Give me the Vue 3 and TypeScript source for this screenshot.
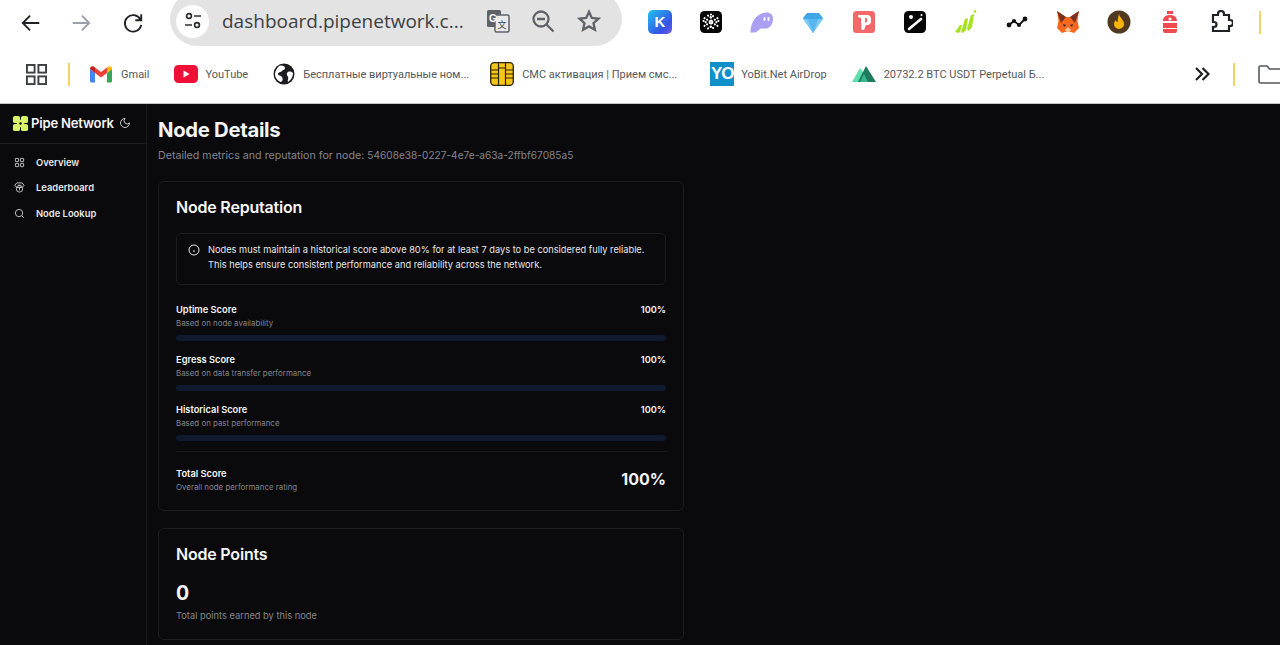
<script setup lang="ts">
const bookmarks = [
  { id: 'gmail', label: 'Gmail' },
  { id: 'youtube', label: 'YouTube' },
  { id: 'globe', label: 'Бесплатные виртуальные ном...' },
  { id: 'sim', label: 'СМС активация | Прием смс...' },
  { id: 'yobit', label: 'YoBit.Net AirDrop' },
  { id: 'nexo', label: '20732.2 BTC USDT Perpetual Б...' }
]

const scores = [
  { name: 'Uptime Score', hint: 'Based on node availability', value: '100%' },
  { name: 'Egress Score', hint: 'Based on data transfer performance', value: '100%' },
  { name: 'Historical Score', hint: 'Based on past performance', value: '100%' }
]
</script>

<template>
  <div class="page">
    <header class="browser">
      <div class="toolbar">
        <svg class="nav-icon back" viewBox="0 0 24 24"><path d="M21 12H4M11 4l-8 8 8 8" /></svg>
        <svg class="nav-icon forward" viewBox="0 0 24 24"><path d="M3 12h17M13 4l8 8-8 8" /></svg>
        <svg class="nav-icon reload" viewBox="0 0 24 24"><path d="M20 8a9 9 0 1 0 1 6M21 2.500V9h-6.500" /></svg>
        <div class="omnibox">
          <span class="site-chip">
            <svg viewBox="0 0 20 20" width="20" height="20"><circle cx="6" cy="5" r="2.400" /><path d="M11 5h7M2 14h7" /><circle cx="14" cy="14" r="2.400" /></svg>
          </span>
          <span class="url">dashboard.pipenetwork.c...</span>
          <svg class="omni-icon translate" viewBox="0 0 24 24" width="24" height="24">
            <rect x="1" y="1" width="14" height="17" rx="1.500" fill="#5f6368" />
            <rect x="9" y="6" width="14" height="17" rx="1.500" fill="#e9e9e9" stroke="#5f6368" stroke-width="1.500" />
            <text x="3" y="13" font-size="10" font-weight="700" fill="#fff" font-family="Liberation Sans">G</text>
            <text x="11.500" y="19" font-size="9" fill="#44474a" font-family="Noto Sans CJK SC">文</text>
          </svg>
          <svg class="omni-icon zoom" viewBox="0 0 24 24" width="24" height="24"><circle cx="10" cy="10" r="7.500" /><path d="M6 10h8M15.500 15.500l7 7" /></svg>
          <svg class="omni-icon star" viewBox="0 0 24 24" width="24" height="24"><path d="M12 2.800l2.800 6.200 6.700.7-5 4.500 1.400 6.600-5.900-3.400-5.900 3.400 1.400-6.600-5-4.500 6.700-.7z" /></svg>
        </div>
        <div class="extensions">
          <span class="ext ext-k">K</span>
          <svg class="ext" viewBox="0 0 24 24"><rect x="1" y="1" width="22" height="22" rx="4.500" fill="#050505" /><g stroke="#fff" stroke-width="2.100" stroke-linecap="round" stroke-dasharray="0.100 2.900" fill="none"><path d="M12 4.500v15M5.500 8.200l13 7.600M18.500 8.200l-13 7.600" /><path d="M9 5.500l3 2 3-2M9 18.500l3-2 3 2M4.500 11l2.500 1-2.500 1M19.500 11l-2.500 1 2.500 1" /></g></svg>
          <svg class="ext" viewBox="0 0 24 24"><path d="M0.500 22C.5 12 7 3 16 2.500c5-.3 7.500 3 7 7.500-.5 5-3.500 8-7 8.500-3 .5-4-.5-6 .5-2 1-3 3.500-6 3.500-1.500 0-3.500.5-3.500-.5z" fill="#ab9ff2" /><ellipse cx="14.500" cy="9" rx="1.100" ry="1.900" fill="#fff" /><ellipse cx="18.500" cy="9" rx="1.100" ry="1.900" fill="#fff" /></svg>
          <svg class="ext" viewBox="0 0 24 24"><path d="M2 8l4-5h12l4 5-10 15z" fill="#3fa7e6" /><path d="M2 9h20L12 23z" fill="#7cc8f5" /><path d="M7 9h10l-5 14z" fill="#56b6f0" /></svg>
          <svg class="ext" viewBox="0 0 24 24"><rect x="1" y="1" width="22" height="22" rx="3.500" fill="#f4686a" /><path d="M6 5h9a4 4 0 0 1 4 4v2a4 4 0 0 1-4 4h-1l-2 5H9.500l-.5-12-3-1z" fill="#fff" /><path d="M13 8h1a1 1 0 0 1 1 1v2.500a1 1 0 0 1-1 1h-1z" fill="#f4686a" /></svg>
          <svg class="ext" viewBox="0 0 24 24"><rect x="1" y="1" width="22" height="22" rx="4.500" fill="#050505" /><path d="M6 19L18 9" stroke="#fff" stroke-width="2.600" stroke-linecap="round" /><circle cx="8" cy="7" r="2" fill="#fff" /><circle cx="18.500" cy="5" r="1" fill="#fff" /></svg>
          <svg class="ext" viewBox="0 0 24 24"><g fill="#a5e21f"><path d="M1 22l5-7 2 0-2 7-2 1z" /><path d="M7 22l4-13 3-1-2 12-3 3z" /><path d="M13 19l4-14 3-1-2 13-3 4z" /><circle cx="21" cy="1.500" r="1.300" /></g></svg>
          <svg class="ext" viewBox="0 0 24 24"><path d="M4 15l5-4 5 4 6-6" fill="none" stroke="#111" stroke-width="1.800" /><g fill="#111"><circle cx="4" cy="15" r="2.400" /><circle cx="9" cy="11" r="2" /><circle cx="14" cy="15" r="2" /><circle cx="20" cy="9" r="2.400" /></g></svg>
          <svg class="ext" viewBox="0 0 24 24"><path d="M1 1l9 6h4l9-6-1.500 10 1.500 7-5 5-3-1h-6l-3 1-5-5 1.500-7z" fill="#f6691f" /><path d="M1 1l9 6-5 6zM23 1l-9 6 5 6z" fill="#7a3020" /><path d="M7 14l3 1-2 2zM17 14l-3 1 2 2z" fill="#2a2a35" /><path d="M9 20l3-3 3 3-1.500 2h-3z" fill="#f6c6a0" /></svg>
          <svg class="ext" viewBox="0 0 24 24"><circle cx="12" cy="12" r="11.500" fill="#50391f" /><path d="M12 4c1 4 5 6 5 10a5 5 0 0 1-10 0c0-2 1-3 2-4 0 2 1 2 1.500 2C11 9 11 7 12 4z" fill="#fbb500" /></svg>
          <svg class="ext" viewBox="0 0 24 24"><path d="M9 1h6v3h-6zM5 11c0-4 3-6 7-6s7 2 7 6H5zM5 13h14v5H5zM5 19h14v2a2 2 0 0 1-2 2H7a2 2 0 0 1-2-2z" fill="#ee4a50" /><circle cx="12" cy="9" r="1.600" fill="#fff" /></svg>
          <svg class="ext puzzle" viewBox="0 0 24 24"><path d="M4 5h5V4a3 3 0 0 1 6 0v1h5v5h1a3 3 0 0 1 0 6h-1v5H4v-4h1a2.500 2.500 0 0 0 0-5H4z" /></svg>
        </div>
        <span class="divider tool-divider"></span>
      </div>

      <div class="bookmarks">
        <svg class="apps" viewBox="0 0 22 22"><rect x="1" y="1" width="8" height="8" /><rect x="13" y="1" width="8" height="8" /><rect x="1" y="13" width="8" height="8" /><rect x="13" y="13" width="8" height="8" /></svg>
        <span class="divider"></span>
        <div v-for="b in bookmarks" :key="b.id" class="bookmark" :class="b.id">
          <svg v-if="b.id === 'gmail'" viewBox="0 0 22 18" width="22" height="18">
            <path d="M0 4v12a1.500 1.500 0 0 0 1.500 1.500H5V8z" fill="#4285f4" />
            <path d="M22 4v12a1.500 1.500 0 0 1-1.500 1.500H17V8z" fill="#34a853" />
            <path d="M5 8V2.500l6 4.500 6-4.500V8l-6 4.500z" fill="#ea4335" />
            <path d="M0 4c0-2.800 3-3.500 5-1.500V8z" fill="#c5221f" />
            <path d="M17 2.500c2-2 5-1.300 5 1.500l-5 4z" fill="#fbbc04" />
          </svg>
          <svg v-else-if="b.id === 'youtube'" viewBox="0 0 24 18" width="24" height="18"><rect width="24" height="18" rx="4.500" fill="#f00f36" /><path d="M9.500 5.500l6 3.500-6 3.500z" fill="#fff" /></svg>
          <svg v-else-if="b.id === 'globe'" viewBox="0 0 22 22" width="22" height="22"><circle cx="11" cy="11" r="10.500" fill="#1b1b1f" /><path d="M6 3c3-1 6 0 6 2s-2 1.500-3 3-4 1-4 3c0 2 3 1 4 3s1 4-1 5c-4-1-6-5-6-8 0-3 2-6 4-8zM15 9c2-1 4 0 5 1 0 4-2 7-5 9-1-2 1-3 0-5s-2-4 0-5z" fill="#fff" /></svg>
          <svg v-else-if="b.id === 'sim'" viewBox="0 0 24 24" width="24" height="24"><rect x=".7" y=".7" width="22.600" height="22.600" rx="3.500" fill="#f5c518" stroke="#2a2208" stroke-width="1.300" /><path d="M8.500 1v22M15.500 1v22M1 8h7.500M1 12h7.500M1 16h7.500M15.500 8H23M15.500 12H23M15.500 16H23M8.500 6h7" stroke="#2a2208" stroke-width="1.200" fill="none" /></svg>
          <span v-else-if="b.id === 'yobit'" class="yo">YO</span>
          <svg v-else viewBox="0 0 24 16" width="24" height="16"><path d="M0 16L8 2l5 7 3 7z" fill="#5ee0ae" /><path d="M6 16L14 0l10 16z" fill="#1f7a5f" /><path d="M8 16l4-8 4 8z" fill="#36b88c" /></svg>
          <span class="bookmark-label">{{ b.label }}</span>
        </div>
        <svg class="more" viewBox="0 0 16 14" width="16" height="14"><path d="M2 1l6 6-6 6M8.500 1l6 6-6 6" /></svg>
        <span class="divider end-divider"></span>
        <svg class="folder" viewBox="0 0 24 20" width="24" height="20"><path d="M1 3.500A1.500 1.500 0 0 1 2.500 2H9l2.500 3H30v14H2.500A1.500 1.500 0 0 1 1 17.500z" /></svg>
      </div>
    </header>

    <div class="app">
      <aside class="sidebar">
        <div class="brand">
          <svg viewBox="0 0 18 18" width="17" height="17"><g fill="#d8f26a"><rect x="1" y="1" width="7.500" height="7.500" rx="2" /><rect x="9.500" y="1" width="7.500" height="7.500" rx="2" /><rect x="1" y="9.500" width="7.500" height="7.500" rx="2" /><rect x="9.500" y="9.500" width="7.500" height="7.500" rx="2" /><rect x="5" y="5" width="8" height="8" /></g><circle cx="9" cy="9" r="1.300" fill="#0a0a0c" /></svg>
          <span class="brand-name">Pipe Network</span>
          <svg class="moon" viewBox="0 0 24 24" width="12" height="12"><path d="M12 3a6 6 0 0 0 9 9 9 9 0 1 1-9-9z" /></svg>
        </div>
        <nav class="nav">
          <a class="nav-item">
            <svg viewBox="0 0 24 24"><rect x="3" y="3" width="7" height="7" rx="1" /><rect x="14" y="3" width="7" height="7" rx="1" /><rect x="14" y="14" width="7" height="7" rx="1" /><rect x="3" y="14" width="7" height="7" rx="1" /></svg>
            Overview
          </a>
          <a class="nav-item">
            <svg viewBox="0 0 24 24"><path d="M6 2h12l4 5-4 5H6L2 7z" /><circle cx="12" cy="15" r="7" /><path d="M8 7h8M12 12v6" /></svg>
            Leaderboard
          </a>
          <a class="nav-item">
            <svg viewBox="0 0 24 24"><circle cx="11" cy="11" r="8" /><path d="M21 21l-4.300-4.300" /></svg>
            Node Lookup
          </a>
        </nav>
      </aside>

      <main class="content">
        <h1>Node Details</h1>
        <p class="subtitle">Detailed metrics and reputation for node: <span class="node-id">54608e38-0227-4e7e-a63a-2ffbf67085a5</span></p>

        <section class="card reputation">
          <h2>Node Reputation</h2>
          <div class="notice">
            <svg viewBox="0 0 24 24" width="12" height="12"><circle cx="12" cy="12" r="10" /><path d="M12 16v-4M12 8h.01" /></svg>
            <p>Nodes must maintain a historical score above 80% for at least 7 days to be considered fully reliable.<br />This helps ensure consistent performance and reliability across the network.</p>
          </div>
          <div v-for="s in scores" :key="s.name" class="score">
            <div class="score-head">
              <div>
                <div class="score-name">{{ s.name }}</div>
                <div class="score-hint">{{ s.hint }}</div>
              </div>
              <span class="score-value">{{ s.value }}</span>
            </div>
            <div class="track"></div>
          </div>
          <div class="total">
            <div>
              <div class="score-name">Total Score</div>
              <div class="score-hint">Overall node performance rating</div>
            </div>
            <span class="total-value">100%</span>
          </div>
        </section>

        <section class="card points">
          <h2>Node Points</h2>
          <div class="points-value">0</div>
          <div class="points-hint">Total points earned by this node</div>
        </section>
      </main>
    </div>
  </div>
</template>

<style>
html,
body {
  margin: 0;
  overflow: hidden;
  background: #0a0a0c;
}
</style>

<style scoped>
.page {
  width: 1280px;
  height: 645px;
  overflow: hidden;
  display: flex;
  flex-direction: column;
  font-family: Inter, "Liberation Sans", sans-serif;
}

.browser {
  height: 104px;
  flex: none;
  background: #fff;
  border-bottom: 1px solid #c9c9c9;
  box-sizing: border-box;
  color: #3c4043;
}

.toolbar {
  height: 46px;
  display: flex;
  align-items: center;
  padding-left: 20px;
  overflow: hidden;
}

.nav-icon {
  width: 22px;
  height: 22px;
  fill: none;
  stroke: #202124;
  stroke-width: 2;
  flex: none;
}

.forward {
  margin-left: 28px;
  stroke: #9aa0a6;
}

.reload {
  margin-left: 30px;
}

.omnibox {
  margin-left: 26px;
  width: 452px;
  height: 54px;
  margin-top: -8px;
  padding: 4px 0 0 6px;
  box-sizing: border-box;
  background: #e3e3e3;
  border-radius: 27px;
  display: flex;
  align-items: center;
  flex: none;
}

.site-chip {
  width: 33px;
  height: 33px;
  border-radius: 50%;
  background: #fff;
  display: flex;
  align-items: center;
  justify-content: center;
  flex: none;
}

.site-chip svg {
  fill: none;
  stroke: #2b2d30;
  stroke-width: 1.700;
}

.url {
  margin-left: 13px;
  width: 243px;
  flex: none;
  font-family: "Open Sans", sans-serif;
  font-size: 19px;
  color: #3c4043;
  white-space: nowrap;
}

.omni-icon {
  fill: none;
  stroke: #5f6368;
  stroke-width: 2.300;
  flex: none;
}

.translate {
  margin-left: 21px;
  stroke: none;
}

.zoom {
  margin-left: 21px;
}

.star {
  margin-left: 22px;
}

.extensions {
  margin-left: 26px;
  display: flex;
  gap: 27px;
  align-items: center;
  margin-top: -2px;
}

.ext {
  width: 24px;
  height: 24px;
  flex: none;
}

.ext-k {
  border-radius: 5px;
  background: linear-gradient(135deg, #21c4f0, #3552e6 70%, #7a5be8);
  color: #fff;
  font: 700 15px/24px "Liberation Sans", sans-serif;
  text-align: center;
}

.puzzle {
  fill: none;
  stroke: #202124;
  stroke-width: 2.200;
}

.divider {
  width: 2px;
  height: 23px;
  background: #f6d365;
  flex: none;
}

.tool-divider {
  margin-left: 26px;
  margin-top: -2px;
}

.bookmarks {
  height: 57px;
  display: flex;
  align-items: center;
  padding: 0 0 1px 26px;
  box-sizing: border-box;
  white-space: nowrap;
  overflow: hidden;
}

.apps {
  width: 21px;
  height: 21px;
  fill: none;
  stroke: #3c4043;
  stroke-width: 2;
  flex: none;
}

.bookmarks > .divider {
  margin-left: 21px;
}

.bookmark {
  display: flex;
  align-items: center;
  gap: 8px;
  flex: none;
  font-family: Roboto, sans-serif;
  font-size: 11px;
  color: #55585c;
}

.bookmark svg {
  flex: none;
}

.gmail {
  margin-left: 20px;
  gap: 9px;
}

.youtube {
  margin-left: 25px;
  gap: 7px;
}

.globe {
  margin-left: 25px;
}

.sim {
  margin-left: 21px;
}

.yobit {
  margin-left: 33px;
  gap: 7px;
}

.nexo {
  margin-left: 25px;
}

.yo {
  width: 24px;
  height: 24px;
  background: #0f90c9;
  color: #fff;
  font: 700 17px/24px "Liberation Sans", sans-serif;
  letter-spacing: -1px;
  text-align: center;
}

.more {
  margin-left: auto;
  fill: none;
  stroke: #202124;
  stroke-width: 2.200;
  flex: none;
}

.bookmarks > .end-divider {
  margin-left: 23px;
}

.folder {
  margin-left: 23px;
  margin-right: -2px;
  fill: none;
  stroke: #55585c;
  stroke-width: 1.600;
  flex: none;
}

.app {
  flex: 1;
  display: flex;
  min-height: 0;
  background: #0a0a0c;
  color: #f5f5f6;
}

.sidebar {
  width: 147px;
  flex: none;
  box-sizing: border-box;
  border-right: 1px solid #1d1d21;
}

.brand {
  height: 40px;
  box-sizing: border-box;
  border-bottom: 1px solid #1d1d21;
  display: flex;
  align-items: center;
  padding: 0 0 1px 12px;
}

.brand-name {
  margin-left: 2px;
  font-size: 13.100px;
  font-weight: 600;
  letter-spacing: -0.200px;
}

.moon {
  margin-left: 5px;
  fill: none;
  stroke: #c9c9cc;
  stroke-width: 2;
}

.nav {
  display: flex;
  flex-direction: column;
  gap: 5.500px;
  padding: 8px 0 0 14px;
}

.nav-item {
  height: 20px;
  display: flex;
  align-items: center;
  gap: 11px;
  font-size: 9.400px;
  font-weight: 600;
  color: #e8e8ea;
}

.nav-item svg {
  width: 11px;
  height: 11px;
  flex: none;
  fill: none;
  stroke: #c9c9cc;
  stroke-width: 2;
}

.content {
  padding: 14px 0 0 11px;
  width: 526px;
}

h1 {
  margin: 0;
  font-size: 20.300px;
  line-height: 24px;
  font-weight: 700;
  letter-spacing: -0.300px;
}

.subtitle {
  margin: 6px 0 0;
  font-size: 10.670px;
  line-height: 14px;
  color: #85858c;
  white-space: nowrap;
}

.node-id {
  font-size: 10.150px;
}

.card {
  box-sizing: border-box;
  width: 526px;
  border: 1px solid #1d1d21;
  border-radius: 6px;
  padding: 15px 17px;
}

.reputation {
  margin-top: 18px;
  height: 330px;
}

.points {
  margin-top: 17px;
  height: 112px;
}

h2 {
  margin: 0;
  font-size: 16px;
  line-height: 20px;
  font-weight: 600;
  letter-spacing: -0.200px;
}

.notice {
  margin-top: 16px;
  height: 52px;
  box-sizing: border-box;
  border: 1px solid #1d1d21;
  border-radius: 5px;
  padding: 9px 11px;
  display: flex;
  gap: 8px;
}

.notice svg {
  margin-top: 1px;
  flex: none;
  fill: none;
  stroke: #e8e8ea;
  stroke-width: 2;
}

.notice p {
  margin: 0;
  font-size: 9.250px;
  line-height: 14.500px;
  color: #e8e8ea;
  white-space: nowrap;
}

.score {
  margin-top: 12px;
}

.notice + .score {
  margin-top: 18px;
}

.score-head {
  display: flex;
  justify-content: space-between;
  align-items: flex-start;
}

.score-name {
  font-size: 9.300px;
  line-height: 14px;
  font-weight: 600;
}

.score-hint {
  font-size: 7.900px;
  line-height: 13px;
  color: #85858c;
}

.score-value {
  font-size: 9.200px;
  line-height: 14px;
  font-weight: 600;
}

.track {
  margin-top: 5px;
  height: 6px;
  border-radius: 3px;
  background: #0f1a2e;
}

.total {
  margin-top: 10px;
  padding-top: 15px;
  border-top: 1px solid #1a1a1e;
  display: flex;
  justify-content: space-between;
  align-items: center;
}

.total-value {
  padding-bottom: 4px;
  font-size: 16px;
  font-weight: 700;
}

.points-value {
  margin-top: 17px;
  font-size: 19.500px;
  line-height: 24px;
  font-weight: 700;
}

.points-hint {
  margin-top: 4px;
  font-size: 9.300px;
  line-height: 14px;
  color: #85858c;
}
</style>
